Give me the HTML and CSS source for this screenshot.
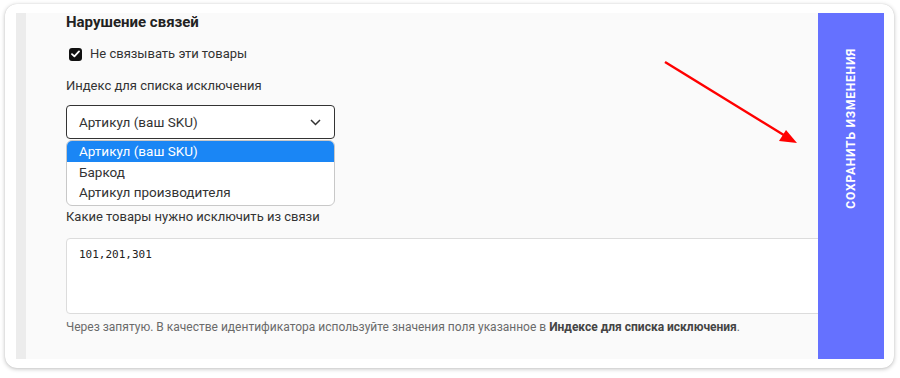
FILE: index.html
```html
<!DOCTYPE html>
<html lang="ru">
<head>
<meta charset="utf-8">
<link rel="stylesheet" href="styles.css">
</head>
<body>
<div class="card">
  <div class="inner">
    <div class="strip"></div>
    <div class="content">
      <div class="title">Нарушение связей</div>
      <label class="check">
        <span class="box"><svg width="9" height="8" viewBox="0 0 9 8"><path d="M1 4.2 L3.4 6.4 L8 1.4" fill="none" stroke="#fff" stroke-width="1.8" stroke-linecap="round" stroke-linejoin="round"/></svg></span>
        <span>Не связывать эти товары</span>
      </label>
      <div class="label">Индекс для списка исключения</div>
      <div class="select-wrap">
        <div class="select">
          <span>Артикул (ваш SKU)</span>
          <svg class="chev" width="11" height="7" viewBox="0 0 11 7"><path d="M1 1 L5.5 5.5 L10 1" fill="none" stroke="#333" stroke-width="1.5"/></svg>
        </div>
        <ul class="options">
          <li class="sel">Артикул (ваш SKU)</li>
          <li>Баркод</li>
          <li>Артикул производителя</li>
        </ul>
      </div>
      <div class="label label2">Какие товары нужно исключить из связи</div>
      <div class="textarea">101,201,301</div>
      <div class="help">Через запятую. В качестве идентификатора используйте значения поля указанное в <b>Индексе для списка исключения</b>.</div>
    </div>
    <div class="save"><span>Сохранить изменения</span></div>
    <svg class="arrow" width="150" height="100" viewBox="0 0 150 100">
      <line x1="3" y1="3" x2="125" y2="78" stroke="#f00" stroke-width="2.5"/>
      <path d="M135 84 L117 82 L124 71 Z" fill="#f00"/>
    </svg>
  </div>
</div>
</body>
</html>
```

FILE: styles.css
```css
* { box-sizing: border-box; }
html, body { margin: 0; padding: 0; background: #fff; }
body {
  width: 900px;
  height: 378px;
  font-family: Roboto, "Noto Sans", sans-serif;
  color: #333;
}
.card {
  margin: 4px 6px 0 5px;
  height: 364px;
  background: #fff;
  border-radius: 12px;
  box-shadow: 0 1px 4px rgba(0,0,0,0.25), 0 0 1px rgba(0,0,0,0.15);
  padding: 9px 10px 9px 11px;
}
.inner {
  position: relative;
  display: flex;
  height: 346px;
}
.strip {
  width: 10px;
  background: #ececec;
}
.content {
  flex: 1;
  background: #fafafa;
  padding: 0 0 0 40px;
  overflow: hidden;
}
.title {
  font-weight: 700;
  font-size: 15px;
  color: #222;
  line-height: 18px;
}
.check {
  display: flex;
  align-items: center;
  gap: 8px;
  margin-top: 14px;
  font-size: 13px;
  line-height: 18px;
}
.box {
  width: 13px;
  height: 13px;
  margin-left: 3px;
  border-radius: 3px;
  background: #111;
  display: flex;
  align-items: center;
  justify-content: center;
}
.label {
  font-size: 13px;
  line-height: 18px;
  margin-top: 14px;
}
.select-wrap {
  position: relative;
  width: 269px;
  margin-top: 10px;
}
.select {
  height: 34px;
  border: 1px solid #333;
  border-radius: 4px;
  background: #fff;
  display: flex;
  align-items: center;
  justify-content: space-between;
  padding: 0 13px 0 12px;
  font-size: 13.5px;
}
.options {
  position: absolute;
  left: 0;
  top: 35px;
  width: 269px;
  margin: 0;
  padding: 0 0 2px;
  list-style: none;
  background: #fff;
  border: 1px solid #c8c8c8;
  border-radius: 6px;
  overflow: hidden;
  font-size: 13.5px;
}
.options li {
  height: 20.5px;
  line-height: 20px;
  padding-left: 12px;
}
.options li.sel {
  background: #1a86f5;
  color: #fff;
}
.label2 {
  margin-top: 69px;
}
.textarea {
  margin-top: 12px;
  width: calc(100% + 20px);
  height: 76px;
  background: #fff;
  border: 1px solid #dcdcdc;
  border-radius: 4px;
  padding: 9px 12px;
  font-family: "DejaVu Sans Mono", monospace;
  font-size: 11px;
  line-height: 14px;
  color: #222;
}
.help {
  margin-top: 5px;
  font-size: 12px;
  line-height: 16px;
  color: #6a6a6a;
}
.help b { color: #444; }
.save {
  width: 66px;
  background: #6571ff;
  display: flex;
  justify-content: center;
  padding-top: 35px;
}
.save span {
  writing-mode: vertical-rl;
  transform: rotate(180deg);
  color: #fff;
  font-weight: 700;
  font-size: 12px;
  letter-spacing: 0.8px;
  text-transform: uppercase;
  height: max-content;
}
.arrow {
  position: absolute;
  left: 646px;
  top: 46px;
}
```
